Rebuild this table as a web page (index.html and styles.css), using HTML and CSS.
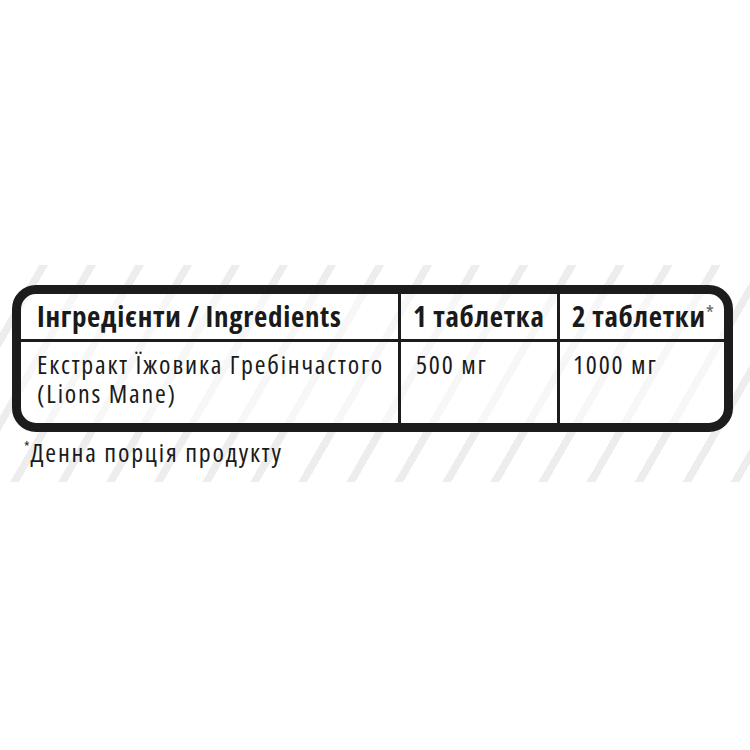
FILE: index.html
```html
<!DOCTYPE html>
<html lang="uk">
<head>
<meta charset="utf-8">
<title>Інгредієнти</title>
<link rel="stylesheet" href="styles.css">
</head>
<body>
<section class="band">
  <div class="facts">
    <div class="cell head c1">Інгредієнти / Ingredients</div>
    <div class="cell head c2">1 таблетка</div>
    <div class="cell head c3">2 таблетки<sup class="ast">*</sup></div>
    <div class="cell body c1">Екстракт Їжовика Гребінчастого<br>(Lions Mane)</div>
    <div class="cell body c2">500 мг</div>
    <div class="cell body c3">1000 мг</div>
  </div>
  <p class="note"><sup class="ast">*</sup>Денна порція продукту</p>
</section>
</body>
</html>
```
FILE: styles.css
```css
html, body {
  margin: 0;
  background: #ffffff;
}
body {
  font-family: "Open Sans", sans-serif;
  font-stretch: 75%;
  color: #1a1a1a;
}
.band {
  margin-top: 265px;
  height: 217px;
  box-sizing: border-box;
  padding: 20px 17px 0 12px;
  background: repeating-linear-gradient(120deg, #ffffff 0px, #ffffff 34px, #ededed 34px, #ededed 41.6px);
}
.facts {
  display: grid;
  grid-template-columns: 380px 159px 164px;
  grid-template-rows: 48px 81px;
  width: 721px;
  box-sizing: border-box;
  border: 9px solid #1c1c1c;
  border-radius: 24px;
  background: rgba(255, 255, 255, 0.55);
  overflow: hidden;
}
.cell {
  box-sizing: border-box;
}
.c1, .c2 {
  border-right: 3px solid #1c1c1c;
}
.head {
  border-bottom: 3px solid #1c1c1c;
  font-weight: 700;
  font-size: 29px;
  line-height: 28px;
  letter-spacing: 0.7px;
  padding-top: 8px;
  white-space: nowrap;
}
.body {
  font-size: 26px;
  line-height: 29px;
  letter-spacing: 1.8px;
  padding-top: 8px;
  white-space: nowrap;
}
.c1 { padding-left: 16px; }
.c2 { padding-left: 12px; }
.c3 { padding-left: 12px; }
.body.c2 { padding-left: 15px; }
.body.c3 { padding-left: 13px; }
.ast {
  font-size: 21px;
  font-weight: 400;
  letter-spacing: 0;
  color: #6a6a6a;
  vertical-align: top;
  line-height: 1;
  position: relative;
  top: 1px;
}
.note {
  margin: 6px 0 0 12px;
  font-size: 26px;
  line-height: 28px;
  letter-spacing: 1.8px;
}
.note .ast {
  font-size: 14px;
  color: #1a1a1a;
  top: 2px;
  margin-right: 1px;
}
```
